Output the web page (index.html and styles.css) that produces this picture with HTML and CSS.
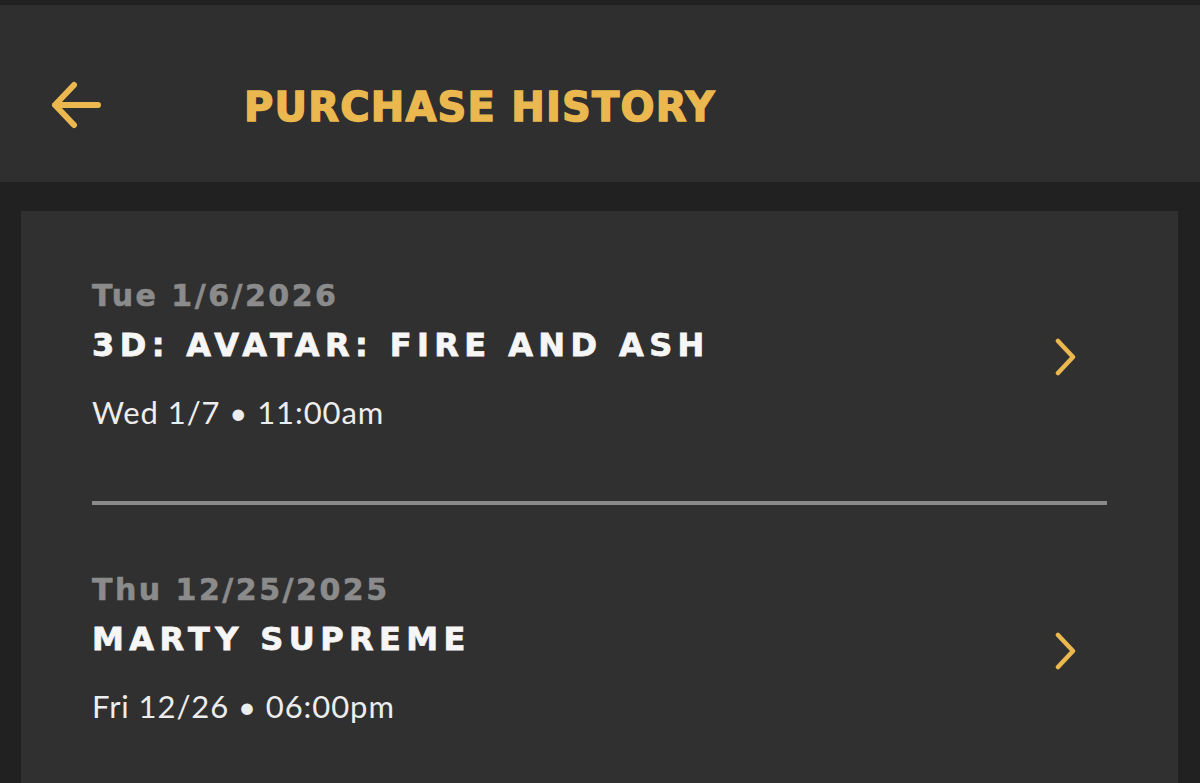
FILE: index.html
```html
<!DOCTYPE html>
<html lang="en">
<head>
<meta charset="utf-8">
<title>Purchase History</title>
<link rel="stylesheet" href="styles.css">
</head>
<body>
<header class="topbar">
  <button class="back" aria-label="Back">
    <svg width="52" height="48" viewBox="0 0 52 48" fill="none" stroke="currentColor" stroke-width="6" stroke-linecap="round" stroke-linejoin="round">
      <path d="M48 24 H5 M24 4 L5 24 L24 44"/>
    </svg>
  </button>
  <h1 class="page-title">PURCHASE HISTORY</h1>
</header>
<main class="content">
  <section class="card">
    <ul class="list">
      <li class="item">
        <a class="row" href="#">
          <div class="info">
            <div class="date">Tue 1/6/2026</div>
            <div class="title">3D: AVATAR: FIRE AND ASH</div>
            <div class="time">Wed 1/7 • 11:00am</div>
          </div>
          <svg class="chev" width="24" height="38" viewBox="0 0 24 38" fill="none" stroke="currentColor" stroke-width="4.5" stroke-linecap="round" stroke-linejoin="round">
            <path d="M4 3 L19 19 L4 35"/>
          </svg>
        </a>
      </li>
      <li class="item">
        <a class="row" href="#">
          <div class="info">
            <div class="date">Thu 12/25/2025</div>
            <div class="title">MARTY SUPREME</div>
            <div class="time">Fri 12/26 • 06:00pm</div>
          </div>
          <svg class="chev" width="24" height="38" viewBox="0 0 24 38" fill="none" stroke="currentColor" stroke-width="4.5" stroke-linecap="round" stroke-linejoin="round">
            <path d="M4 3 L19 19 L4 35"/>
          </svg>
        </a>
      </li>
    </ul>
  </section>
</main>
</body>
</html>
```
FILE: styles.css
```css
* { box-sizing: border-box; }
html, body { margin: 0; padding: 0; }
body {
  background: #212121;
  padding-top: 5px;
  font-family: Lato, "Noto Sans", sans-serif;
  height: 783px;
  overflow: hidden;
}
.topbar {
  height: 177px;
  background: #2f2f2f;
  display: flex;
  align-items: center;
  padding: 22px 0 0 50px;
}
.back {
  background: none;
  border: 0;
  padding: 0;
  color: #ebb84f;
  display: flex;
  cursor: pointer;
}
.page-title {
  margin: 4px 0 0 142px;
  font-family: "DejaVu Sans", Lato, sans-serif;
  font-size: 40px;
  font-weight: 700;
  color: #ebb84f;
  letter-spacing: 1.2px;
  line-height: 48px;
  -webkit-text-stroke: 1.4px #ebb84f;
}
.content {
  padding: 29px 22px 0 21px;
}
.card {
  background: #303030;
  min-height: 600px;
  padding: 0 71px;
}
.list { list-style: none; margin: 0; padding: 0; }
.item { padding: 68px 0 70px; }
.item + .item { border-top: 4px solid #8a8a8a; }
.row {
  display: flex;
  align-items: center;
  text-decoration: none;
}
.info { flex: 1; }
.date {
  font-family: "DejaVu Sans", Lato, sans-serif;
  font-size: 30px;
  line-height: 34px;
  font-weight: 700;
  color: #8b8b8b;
  letter-spacing: 2.5px;
  -webkit-text-stroke: 0.6px #8b8b8b;
}
.title {
  margin-top: 12px;
  font-family: "DejaVu Sans", Lato, sans-serif;
  font-size: 32px;
  line-height: 40px;
  font-weight: 700;
  color: #f6f6f6;
  letter-spacing: 5.4px;
  -webkit-text-stroke: 0.8px #f6f6f6;
}
.time {
  margin-top: 28px;
  font-size: 31px;
  line-height: 38px;
  font-weight: 400;
  color: #ededed;
  letter-spacing: 0.03em;
}
.chev {
  color: #ebb84f;
  margin: 4px 29px 0 0;
}
```
